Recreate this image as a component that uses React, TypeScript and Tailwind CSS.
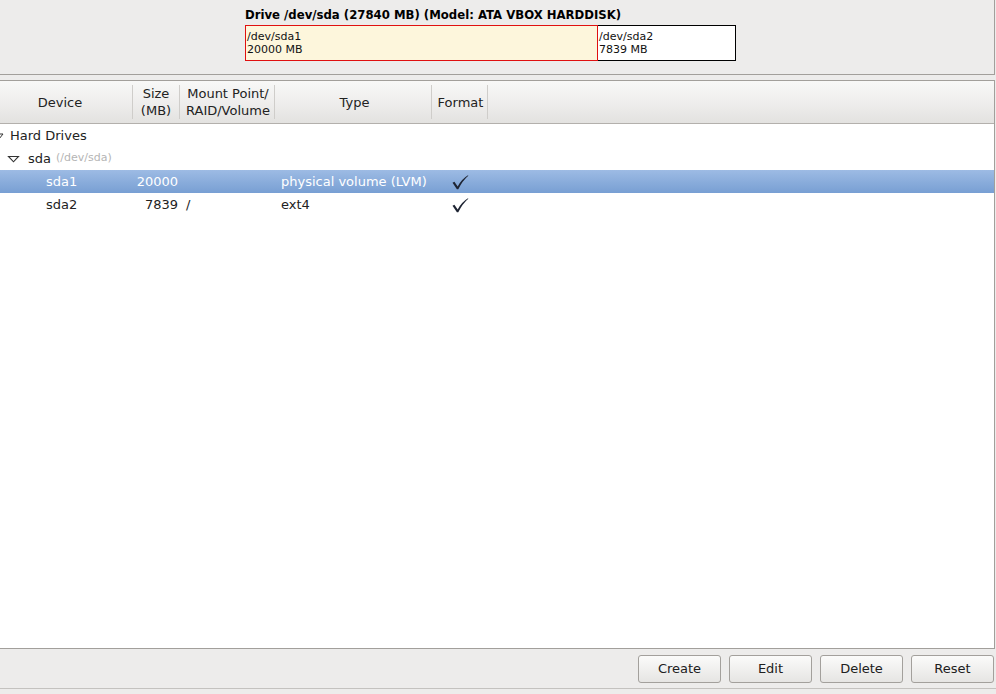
import { ReactNode } from 'react';

const font = { fontFamily: '"DejaVu Sans", Verdana, sans-serif' };

function Check() {
  return (
    <svg width="18" height="16" viewBox="0 0 18 16" className="block">
      <path
        d="M1.5 8.8 L3.4 7.8 L6.7 12.4 Q10.6 5 17 1.2 L17.3 1.7 Q11.6 6.5 7.3 15.2 L5.9 15.2 Z"
        fill="#1e2433"
      />
    </svg>
  );
}

function HeaderCell({
  w,
  children,
  last,
  pad,
}: {
  w: string;
  children: ReactNode;
  last?: boolean;
  pad?: string;
}) {
  return (
    <div className={`${w} flex h-full items-center justify-center py-[5px]`}>
      <div className={`flex-1 text-center leading-[17px] ${pad ?? ''}`}>{children}</div>
      {!last && <div className="h-[34px] w-px self-center bg-[#cfcdca]" />}
    </div>
  );
}

type Row = { dev: string; size: string; mount: string; type: string; sel?: boolean };

const rows: Row[] = [
  { dev: 'sda1', size: '20000', mount: '', type: 'physical volume (LVM)', sel: true },
  { dev: 'sda2', size: '7839', mount: '/', type: 'ext4' },
];

function Btn({ label }: { label: string }) {
  return (
    <button
      type="button"
      className="h-[28px] w-[83px] rounded-[3px] border border-[#a3a09c] bg-gradient-to-b from-[#fbfbfa] to-[#e6e5e3] text-[13px] text-[#202020]"
    >
      {label}
    </button>
  );
}

export default function App() {
  return (
    <div style={font} className="flex h-[694px] w-[996px] flex-col overflow-hidden bg-[#edeceb] text-[#202020]">
      {/* drive map */}
      <div className="h-[75px] w-[995px] shrink-0 border-b border-r border-[#a29f9b] pl-[245px] pt-[8px]">
        <div className="text-[11.7px] font-bold leading-[15px] text-black">
          Drive /dev/sda (27840 MB) (Model: ATA VBOX HARDDISK)
        </div>
        <div className="mt-[2px] flex h-[36px] w-[491px] text-[11px] leading-[12.5px] text-[#111]">
          <div className="w-[353px] border border-[#e01010] bg-[#fdf6dc] pl-[1px] pt-[5px]">
            <div>/dev/sda1</div>
            <div>20000 MB</div>
          </div>
          <div className="flex-1 border border-l-0 border-black bg-white pl-[1px] pt-[5px]">
            <div>/dev/sda2</div>
            <div>7839 MB</div>
          </div>
        </div>
      </div>

      {/* tree */}
      <div className="mt-[5px] flex w-[995px] flex-1 flex-col border-r border-t border-b border-[#a29f9b] bg-white">
        <div className="flex h-[43px] shrink-0 items-center border-b border-[#b3b0ac] bg-gradient-to-b from-[#f8f8f7] via-[#efeeed] to-[#e3e2e0] text-[13px] text-[#222]">
          <HeaderCell w="w-[133px]" pad="pr-[12px]">
            Device
          </HeaderCell>
          <HeaderCell w="w-[47px]">
            Size
            <br />
            (MB)
          </HeaderCell>
          <HeaderCell w="w-[95px]" pad="pl-[2px]">
            Mount Point/
            <br />
            RAID/Volume
          </HeaderCell>
          <HeaderCell w="w-[157px]" pad="pl-[3px]">
            Type
          </HeaderCell>
          <HeaderCell w="w-[56px]" pad="pl-[2px]">
            Format
          </HeaderCell>
          <div className="flex-1" />
        </div>

        <div className="text-[13px] text-[#222]">
          <div className="flex h-[23px] items-center">
            <svg width="10" height="10" viewBox="0 0 10 10" className="-ml-[6px]">
              <path d="M1 3 L9 3 L5 8 Z" fill="none" stroke="#333" strokeWidth="1" />
            </svg>
            <span className="ml-[6px]">Hard Drives</span>
          </div>
          <div className="flex h-[23px] items-center">
            <svg width="13" height="10" viewBox="0 0 13 10" className="ml-[7px]">
              <path d="M1.5 2.5 L11.5 2.5 L6.5 7.8 Z" fill="none" stroke="#333" strokeWidth="1.1" />
            </svg>
            <span className="ml-[8px]">sda</span>
            <span className="ml-[5px] text-[11px] text-[#b5b5b5]">(/dev/sda)</span>
          </div>
          {rows.map((r) => (
            <div
              key={r.dev}
              className={
                'flex h-[23px] items-center ' +
                (r.sel ? 'bg-gradient-to-b from-[#9dbbe4] to-[#789fd3] text-white' : '')
              }
            >
              <span className="w-[133px] pl-[46px]">{r.dev}</span>
              <span className="w-[45px] text-right">{r.size}</span>
              <span className="w-[97px] pl-[8px]">{r.mount}</span>
              <span className="w-[176px] pl-[6px]">{r.type}</span>
              <span className="pt-[1px]">
                <Check />
              </span>
            </div>
          ))}
        </div>
      </div>

      {/* buttons */}
      <div className="flex h-[40px] shrink-0 items-center justify-end gap-[8px] border-b border-[#c4c2bf] pr-[2px] pt-[1px]">
        <Btn label="Create" />
        <Btn label="Edit" />
        <Btn label="Delete" />
        <Btn label="Reset" />
      </div>
      <div className="h-[5px] shrink-0" />
    </div>
  );
}
